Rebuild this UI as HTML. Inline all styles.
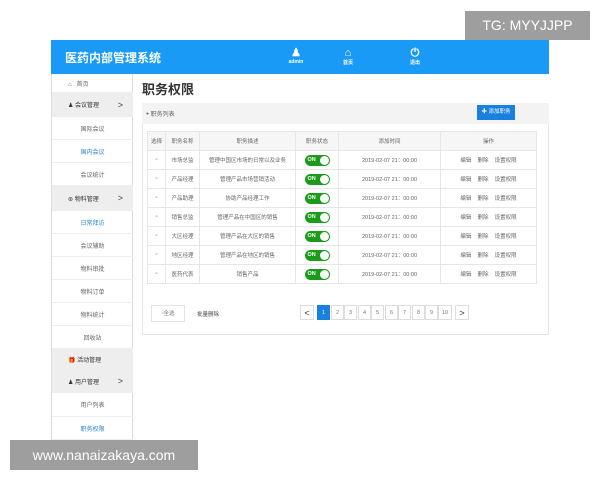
<!DOCTYPE html>
<html><head><meta charset="utf-8"><style>
*{margin:0;padding:0;box-sizing:border-box}
body{width:600px;height:480px;background:#fff;position:relative;overflow:hidden;font-family:"Liberation Sans","Noto Sans CJK SC",sans-serif;color:#555}
.a{position:absolute}
.hdr{left:51px;top:40px;width:498px;height:34px;background:#1a9af7}
.hdr .t{left:14px;top:9px;color:#fff;font-size:12px;font-weight:bold}
.ic{color:#fff;font-size:5px;text-align:center;width:30px;font-weight:bold}
.side{left:51px;top:74px;width:82px;height:366px;border-right:1px solid #ddd;border-left:1px solid #ddd}
.si{position:absolute;left:0;width:81px;font-size:6px;text-align:center;border-bottom:1px solid #eee;display:flex;align-items:center;justify-content:center;color:#666}
.g{background:#eee;color:#333;justify-content:flex-start;padding-left:16px}
.b{color:#2a86d6}
.arr{position:absolute;right:10px;font-size:9px;color:#444}
.panel{left:142px;top:103px;width:407px;height:232px;border:1px solid #e5e5e5;border-radius:2px}
.ph{left:142px;top:103px;width:407px;height:21px;background:#f3f3f3}
table{position:absolute;left:147px;top:131px;width:390px;border-collapse:collapse;font-size:5.5px;color:#666}
td,th{border:1px solid #e6e6e6;text-align:center;height:19px;font-weight:normal}
th{background:#f6f6f6;height:19px}
.sw{display:inline-block;width:25px;height:11px;background:#1a9b1a;border-radius:6px;position:relative;vertical-align:middle}
.sw b{position:absolute;left:3px;top:2px;color:#fff;font-size:5.5px}
.sw i{position:absolute;right:1px;top:1px;width:9px;height:9px;background:#fff;border-radius:50%}
.pg{top:305px;width:13px;height:15px;border:1px solid #ddd;font-size:5.5px;text-align:center;line-height:14px;color:#777}
</style></head><body>
<div class="a hdr"><div class="a t">医药内部管理系统</div>
<div class="a ic" style="left:230px;top:7px"><div style="font-size:11px;line-height:12px">&#9823;</div>admin</div>
<div class="a ic" style="left:282px;top:7px"><div style="font-size:11px;line-height:12px">&#8962;</div>首页</div>
<div class="a ic" style="left:349px;top:7px"><div style="font-size:11px;line-height:12px">&#9211;</div>退出</div>
</div>
<div class="a side">
<div class="si" style="top:0;height:19px;justify-content:flex-start;padding-left:16px">⌂&nbsp;&nbsp;&nbsp;首页</div>
<div class="si g" style="top:19px;height:24px">♟ 会议管理<span class="arr">&gt;</span></div>
<div class="si" style="top:43px;height:23px">国际会议</div>
<div class="si b" style="top:66px;height:23px">国内会议</div>
<div class="si" style="top:89px;height:23px">会议统计</div>
<div class="si g" style="top:112px;height:25px">⊛ 物料管理<span class="arr">&gt;</span></div>
<div class="si b" style="top:137px;height:23px">日常拜访</div>
<div class="si" style="top:160px;height:23px">会议辅助</div>
<div class="si" style="top:183px;height:23px">物料审批</div>
<div class="si" style="top:206px;height:23px">物料订单</div>
<div class="si" style="top:229px;height:23px">物料统计</div>
<div class="si" style="top:252px;height:23px">回收站</div>
<div class="si g" style="top:275px;height:21px">🎁 活动管理</div>
<div class="si g" style="top:296px;height:23px">♟ 用户管理<span class="arr">&gt;</span></div>
<div class="si" style="top:319px;height:24px">用户列表</div>
<div class="si b" style="top:343px;height:23px">职务权限</div>
</div>
<div class="a" style="left:142px;top:79px;font-size:13px;font-weight:bold;color:#333">职务权限</div>
<div class="a panel"></div>
<div class="a ph"><span class="a" style="left:4px;top:6px;font-size:6px;color:#666">ꔷ 职务列表</span>
<div class="a" style="left:335px;top:2px;width:38px;height:15px;background:#1a80e0;color:#fff;font-size:5.5px;line-height:15px;text-align:center">✚ 添加职务</div></div>
<table>
<tr><th style="width:18px">选择</th><th style="width:34px">职务名称</th><th style="width:96px">职务描述</th><th style="width:43px">职务状态</th><th style="width:102px">添加时间</th><th>操作</th></tr>
<tr><td>▫</td><td>市场总监</td><td>管理中国区市场的日常以及业务</td><td><span class="sw"><b>ON</b><i></i></span></td><td>2019-02-07 21：00:00</td><td>编辑&nbsp;&nbsp;&nbsp; 删除&nbsp;&nbsp;&nbsp; 设置权限</td></tr>
<tr><td>▫</td><td>产品经理</td><td>管理产品市场营销活动</td><td><span class="sw"><b>ON</b><i></i></span></td><td>2019-02-07 21：00:00</td><td>编辑&nbsp;&nbsp;&nbsp; 删除&nbsp;&nbsp;&nbsp; 设置权限</td></tr>
<tr><td>▫</td><td>产品助理</td><td>协助产品经理工作</td><td><span class="sw"><b>ON</b><i></i></span></td><td>2019-02-07 21：00:00</td><td>编辑&nbsp;&nbsp;&nbsp; 删除&nbsp;&nbsp;&nbsp; 设置权限</td></tr>
<tr><td>▫</td><td>销售总监</td><td>管理产品在中国区的销售</td><td><span class="sw"><b>ON</b><i></i></span></td><td>2019-02-07 21：00:00</td><td>编辑&nbsp;&nbsp;&nbsp; 删除&nbsp;&nbsp;&nbsp; 设置权限</td></tr>
<tr><td>▫</td><td>大区经理</td><td>管理产品在大区的销售</td><td><span class="sw"><b>ON</b><i></i></span></td><td>2019-02-07 21：00:00</td><td>编辑&nbsp;&nbsp;&nbsp; 删除&nbsp;&nbsp;&nbsp; 设置权限</td></tr>
<tr><td>▫</td><td>地区经理</td><td>管理产品在地区的销售</td><td><span class="sw"><b>ON</b><i></i></span></td><td>2019-02-07 21：00:00</td><td>编辑&nbsp;&nbsp;&nbsp; 删除&nbsp;&nbsp;&nbsp; 设置权限</td></tr>
<tr><td>▫</td><td>医药代表</td><td>销售产品</td><td><span class="sw"><b>ON</b><i></i></span></td><td>2019-02-07 21：00:00</td><td>编辑&nbsp;&nbsp;&nbsp; 删除&nbsp;&nbsp;&nbsp; 设置权限</td></tr>
</table>
<div class="a" style="left:151px;top:305px;width:34px;height:17px;border:1px solid #e5e5e5;font-size:5.5px;line-height:16px;text-align:center;color:#777">▫全选</div>
<div class="a" style="left:197px;top:310px;font-size:5.5px;color:#444">批量删除</div>
<div class="a pg" style="left:300px;width:14px;font-size:9px;color:#333">&lt;</div>
<div class="a pg" style="left:317px;background:#1a80e0;color:#fff;border-color:#1a80e0">1</div>
<div class="a pg" style="left:331px">2</div>
<div class="a pg" style="left:344px">3</div>
<div class="a pg" style="left:358px">4</div>
<div class="a pg" style="left:371px">5</div>
<div class="a pg" style="left:385px">6</div>
<div class="a pg" style="left:398px">7</div>
<div class="a pg" style="left:412px">8</div>
<div class="a pg" style="left:425px">9</div>
<div class="a pg" style="left:438px;width:14px">10</div>
<div class="a pg" style="left:455px;width:14px;font-size:9px;color:#333">&gt;</div>
<div class="a" style="left:465px;top:11px;width:125px;height:29px;background:#9e9e9e;color:#fff;font-size:14px;line-height:29px;text-align:center">TG: MYYJJPP</div>
<div class="a" style="left:10px;top:440px;width:188px;height:30px;background:#9e9e9e;color:#fff;font-size:14px;line-height:30px;text-align:center">www.nanaizakaya.com</div>
</body></html>
